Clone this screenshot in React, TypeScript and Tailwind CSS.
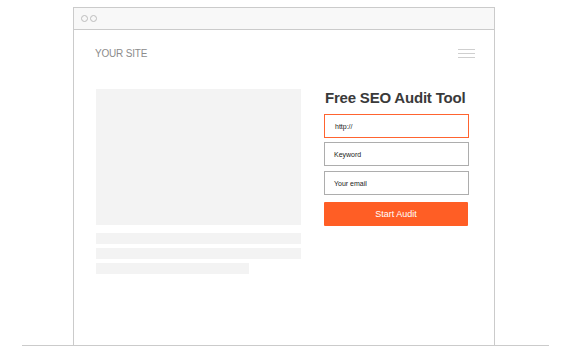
const font = { fontFamily: '"Liberation Sans", Arial, sans-serif' }

function Field({ label, active }: { label: string; active?: boolean }) {
  return (
    <div
      className={
        active
          ? 'flex h-[24px] items-center border border-[#ff6430] pl-[10px] pt-[2px] text-[7px] text-[#222]'
          : 'flex h-[24px] items-center border border-[#adadad] pl-[9px] pt-[2px] text-[7px] text-[#222]'
      }
    >
      {label}
    </div>
  )
}

export default function App() {
  return (
    <div className="h-[349px] w-[569px] bg-white pt-[7px]" style={font}>
      <div className="ml-[73px] w-[422px]">
        {/* window chrome */}
        <div className="flex h-[23px] items-center gap-[2px] border border-[#cbcbcb] bg-[#f8f8f8] pl-[7px]">
          <span className="h-[7px] w-[7px] rounded-full border border-[#bdbdbd]" />
          <span className="h-[7px] w-[7px] rounded-full border border-[#bdbdbd]" />
        </div>

        <div className="h-[315px] border-x border-[#cbcbcb]">
          <div className="flex h-[46px] items-center justify-between pl-[21px] pr-[19px]">
            <span className="text-[10px] tracking-[-0.2px] text-[#8c8c8c]">YOUR SITE</span>
            <div className="flex w-[17px] flex-col gap-[3px]">
              <span className="h-px bg-[#cfcfcf]" />
              <span className="h-px bg-[#cfcfcf]" />
              <span className="h-px bg-[#cfcfcf]" />
            </div>
          </div>

          <div className="mt-[13px] flex gap-[23px] pl-[22px]">
            <div className="w-[205px]">
              <div className="h-[136px] bg-[#f3f3f3]" />
              <div className="mt-[8px] h-[11px] bg-[#f3f3f3]" />
              <div className="mt-[4px] h-[11px] bg-[#f3f3f3]" />
              <div className="mt-[4px] h-[11px] w-[153px] bg-[#f3f3f3]" />
            </div>

            <div className="w-[145px]">
              <h1 className="mt-[1px] whitespace-nowrap pl-[1px] text-[15px] leading-[15px] font-bold tracking-[-0.2px] text-[#3a3a3a]">
                Free SEO Audit Tool
              </h1>
              <div className="mt-[9px]">
                <Field label="http://" active />
              </div>
              <div className="mt-[4px]">
                <Field label="Keyword" />
              </div>
              <div className="mt-[5px]">
                <Field label="Your email" />
              </div>
              <button
                type="button"
                className="mt-[7px] flex h-[24px] w-[144px] items-center justify-center rounded-[1px] bg-[#ff5e25] pt-[2px] text-[9px] text-white"
              >
                Start Audit
              </button>
            </div>
          </div>
        </div>
      </div>
      <div className="ml-[22px] h-px w-[527px] bg-[#cbcbcb]" />
    </div>
  )
}
